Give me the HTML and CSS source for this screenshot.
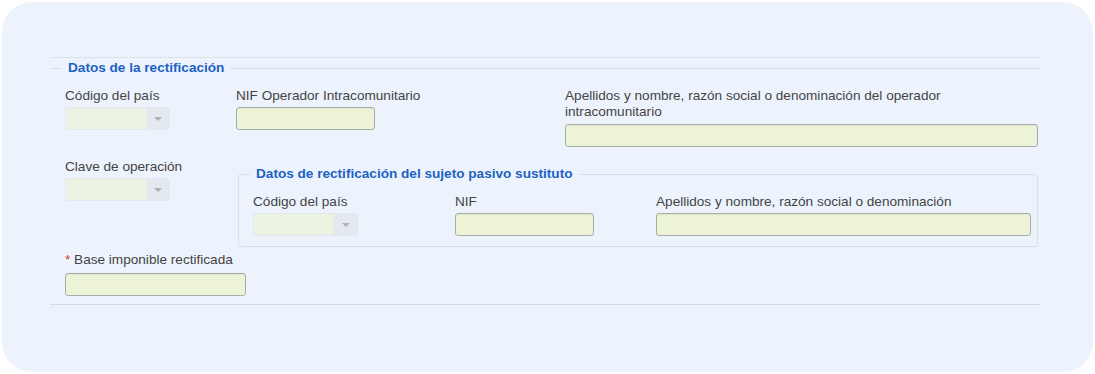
FILE: index.html
```html
<!DOCTYPE html>
<html lang="es">
    <head>
        <title>Datos de la rectificación</title>
        <link rel="stylesheet" href="styles.css">
    </head>
    <body>
        <div class="card">
            <div class="section">
                <fieldset class="group">
                    <legend>Datos de la rectificación</legend>

                    <!-- Fila 1 -->
                    <div class="row row-first">
                        <div class="field">
                            <label>Código del país</label>
                            <div class="select"><span class="select-value"></span><span class="select-arrow"></span></div>
                        </div>
                        <div class="field">
                            <label>NIF Operador Intracomunitario</label>
                            <input type="text" class="input input-nif">
                        </div>
                        <div class="field">
                            <label class="label-long">Apellidos y nombre, razón social o denominación del operador intracomunitario</label>
                            <input type="text" class="input input-wide">
                        </div>
                    </div>

                    <!-- Fila 2 -->
                    <div class="row row-second">
                        <div class="field">
                            <label>Clave de operación</label>
                            <div class="select"><span class="select-value"></span><span class="select-arrow"></span></div>
                        </div>
                        <fieldset class="group group-inner">
                            <legend>Datos de rectificación del sujeto pasivo sustituto</legend>
                            <div class="inner-row">
                                <div class="field">
                                    <label>Código del país</label>
                                    <div class="select"><span class="select-value"></span><span class="select-arrow"></span></div>
                                </div>
                                <div class="field">
                                    <label>NIF</label>
                                    <input type="text" class="input input-nif">
                                </div>
                                <div class="field">
                                    <label>Apellidos y nombre, razón social o denominación</label>
                                    <input type="text" class="input input-wide">
                                </div>
                            </div>
                        </fieldset>
                    </div>

                    <!-- Fila 3 -->
                    <div class="field">
                        <label class="label-base"><span class="required">*</span> Base imponible rectificada</label>
                        <input type="text" class="input input-base">
                    </div>
                </fieldset>
            </div>
        </div>
    </body>
</html>
```

FILE: styles.css
```css
/* General */
body {
    margin: 0;
    background-color: #fff;
    font-family: "Liberation Sans", Arial, sans-serif;
    font-size: 13.6px;
    color: #444;
}

/* Card */
.card {
    margin: 2px;
    height: 370px;
    box-sizing: border-box;
    padding: 55px 53px 0 48px;
    background-color: #edf3fd;
    border-radius: 30px;
}

.section {
    width: 990px;
    padding: 2px 0;
    border-top: 1px solid #dde3eb;
    border-bottom: 1px solid #e6ebf2;
}

/* Fieldsets */
.group {
    margin: 0;
    padding: 12px 2px 8px 15px;
    border: none;
    border-top: 1px solid #d9dfe7;
    border-bottom: 1px solid #d3d9e1;
}

.group legend {
    margin-left: -3px;
    padding: 0 6px;
    line-height: 16px;
    font-weight: bold;
    color: #1d62c4;
}

.group-inner {
    margin-top: 7px;
    margin-left: 2px;
    padding: 12px 6px 10px 14px;
    border: 1px solid #d9dfe7;
    border-radius: 3px;
}

/* Rows */
.row {
    display: grid;
    grid-template-columns: 171px 329px 1fr;
}

.row-first {
    margin-bottom: 12px;
}

.row-second {
    grid-template-columns: 171px 1fr;
    margin-bottom: 5px;
}

.inner-row {
    display: grid;
    grid-template-columns: 202px 201px 1fr;
}

/* Fields */
.field label {
    display: block;
    line-height: 16px;
    margin-bottom: 3px;
}

.field .label-long {
    padding-right: 60px;
    margin-bottom: 4px;
}

.field .label-base {
    margin-bottom: 5px;
}

.required {
    color: #d9342b;
}

.input {
    display: block;
    box-sizing: border-box;
    height: 23px;
    margin: 0;
    padding: 2px 6px;
    background-color: #edf3d7;
    border: 1px solid #a7aea8;
    border-radius: 3px;
    box-shadow: inset 0 1px 1px rgba(0, 0, 0, 0.05);
    font: inherit;
}

.input-nif {
    width: 139px;
}

.input-wide {
    width: 100%;
}

.input-base {
    width: 181px;
}

/* Disabled selects */
.select {
    display: flex;
    width: 105px;
    height: 23px;
    box-sizing: border-box;
    border: 1px solid #e3e8ee;
    border-radius: 3px;
    overflow: hidden;
}

.select-value {
    flex: 1;
    background-color: #edf3e3;
}

.select-arrow {
    width: 23px;
    background-color: #e4e9f0;
    display: flex;
    align-items: center;
    justify-content: center;
}

.select-arrow::after {
    content: "";
    border-left: 4px solid transparent;
    border-right: 4px solid transparent;
    border-top: 4px solid #a9b1ba;
}
```
